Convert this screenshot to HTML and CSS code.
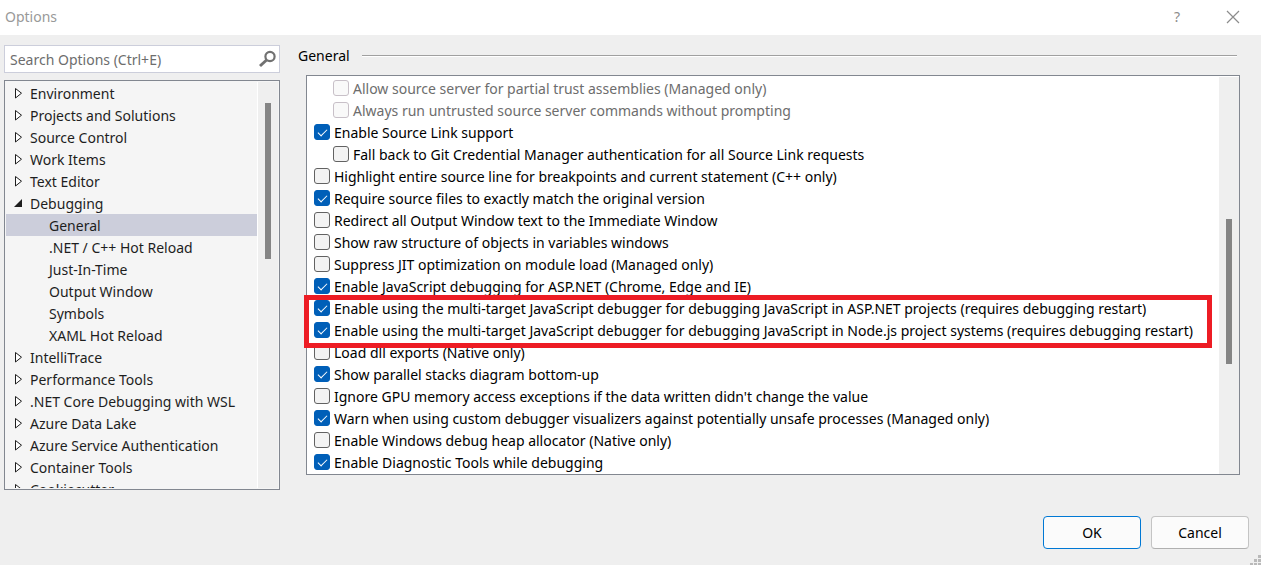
FILE: index.html
```html
<!DOCTYPE html>
<html lang="en">
<head>
<meta charset="utf-8">
<title>Options</title>
<link rel="stylesheet" href="styles.css">
</head>
<body>
<div class="dialog">
  <header class="titlebar">
    <h1 class="title">Options</h1>
    <button class="title-button help" type="button" aria-label="Help">?</button>
    <button class="title-button" type="button" aria-label="Close"><svg width="14" height="14" viewBox="0 0 14 14"><path d="M1 1L13 13M13 1L1 13" fill="none" stroke="#8c8c8c" stroke-width="1.2"/></svg></button>
  </header>
  <main class="content">
    <nav class="sidebar">
      <div class="search">
        <input class="search-input" type="text" placeholder="Search Options (Ctrl+E)" aria-label="Search Options">
        <svg class="search-icon" width="18" height="18" viewBox="0 0 18 18"><circle cx="12" cy="6.5" r="4.6" fill="none" stroke="#717171" stroke-width="2.2"/><path d="M8.6 10L2 16" stroke="#717171" stroke-width="3"/></svg>
      </div>
      <div class="tree">
        <ul class="tree-items" id="tree"></ul>
        <div class="scrollbar"><div class="thumb tree-thumb"></div></div>
      </div>
    </nav>
    <section class="page">
      <h2 class="page-title">General</h2>
      <div class="list-frame">
        <div class="list">
          <div class="options" id="options"></div>
          <div class="scrollbar"><div class="thumb list-thumb"></div></div>
        </div>
        <div class="highlight"></div>
      </div>
    </section>
  </main>
  <footer class="footer">
    <button class="button primary" type="button">OK</button>
    <button class="button" type="button">Cancel</button>
  </footer>
  <svg class="grip" width="11" height="10" viewBox="0 0 11 10" fill="#b9b9b9"><path d="M8 0h3v3h-3zM4 4h3v3h-3zM8 4h3v3h-3zM0 8h3v2h-3zM4 8h3v2h-3zM8 8h3v2h-3z"/></svg>
</div>
<script src="script.js"></script>
</body>
</html>
```
FILE: styles.css
```css
* { box-sizing: border-box; }
body {
  margin: 0;
  background: #efefef;
  color: #1e1e1e;
  font-family: "Noto Sans", "Open Sans", sans-serif;
  font-size: 14px;
  line-height: 22px;
}
.dialog { position: relative; display: flex; flex-direction: column; height: 100vh; }
.titlebar { display: flex; align-items: center; height: 35px; padding: 0 0 2px 5px; background: #fff; flex: none; }
.title { flex: 1; margin: 0; font-size: 14px; font-weight: 400; color: #999; }
.title-button { width: 56px; height: 32px; padding: 0; border: 0; background: none; color: #8c8c8c; font: inherit; }
.title-button svg { display: block; margin: auto; }
.content { flex: 1; display: flex; min-height: 0; padding-left: 4px; gap: 18px; }
.sidebar { flex: none; width: 276px; padding-top: 10px; display: flex; flex-direction: column; gap: 7px; }
.search { display: flex; align-items: center; flex: none; height: 28px; padding: 0 3px 0 5px; background: #fff; border: 1px solid #cccedb; }
.search-input { flex: 1; min-width: 0; padding: 2px 0 0; border: 0; outline: 0; background: none; font: inherit; color: #1e1e1e; }
.search-input::placeholder { color: #6d6d6d; opacity: 1; }
.tree { flex: 1; min-height: 0; display: flex; padding: 1px; border: 1px solid #828790; background: #f5f5f5; }
.tree-items { flex: 1; margin: 0; padding: 0; list-style: none; overflow: hidden; }
.tree-item { display: flex; align-items: center; height: 22px; padding-left: 8px; gap: 6px; white-space: nowrap; }
.tree-item.child { padding-left: 43px; }
.tree-item.selected { background: #cccedb; }
.tree-item span, .option span { padding-top: 2px; }
.arrow { flex: none; }
.scrollbar { flex: none; width: 20px; background: #efefef; }
.thumb { width: 6px; margin-left: 7px; background: #858585; }
.tree .scrollbar { width: 21px; border-left: 1px solid #fff; }
.tree-thumb { height: 156px; margin-top: 21px; }
.list-thumb { height: 145px; margin-top: 142px; }
.page { flex: 1; min-width: 0; padding: 10px 21px 15px 0; display: flex; flex-direction: column; gap: 8px; }
.page-title { display: flex; align-items: center; gap: 12px; margin: 0 3px 0 0; font-size: 14px; font-weight: 400; color: #000; }
.page-title::after { content: ""; flex: 1; height: 2px; background: linear-gradient(#a0a0a0 50%, #fff 50%); }
.list-frame { position: relative; flex: 1; min-height: 0; margin-left: 8px; display: flex; }
.list { flex: 1; min-width: 0; display: flex; padding-top: 1px; border: 1px solid #828790; background: #fff; }
.options { flex: 1; min-width: 0; overflow: hidden; padding-left: 7px; color: #000; }
.option { display: flex; align-items: center; gap: 4px; height: 22px; white-space: nowrap; }
.option.nested { padding-left: 19px; }
.option.disabled { color: #6d6d6d; }
.check { appearance: none; flex: none; width: 16px; height: 16px; margin: 0; border: 1px solid #626262; border-radius: 3px; background: #f3f3f3; }
.check:disabled { border-color: #c8c0c8; background: #f9f9f9; }
.check:checked { border-color: #005fb8; background: #005fb8; }
.check:checked::before { content: ""; display: block; width: 8px; height: 4px; margin: 4px 0 0 3px; border: solid #fff; border-width: 0 0 1px 1px; transform: rotate(-45deg); }
.highlight { position: absolute; left: -2px; top: 220px; width: 908px; height: 53px; border: 5px solid #ed1c24; pointer-events: none; }
.footer { flex: none; display: flex; justify-content: flex-end; gap: 10px; padding: 26px 12px 16px; }
.button { width: 98px; height: 33px; padding: 0; border: 1px solid #c4c4c4; border-bottom-color: #b0b0b0; border-radius: 4px; background: #fbfbfb; color: #000; font: inherit; }
.button.primary { border-color: #0078d4; }
.grip { position: absolute; right: 0; bottom: 0; }
```
FILE: script.js
```js
const tree = [
  ["Environment"], ["Projects and Solutions"], ["Source Control"], ["Work Items"], ["Text Editor"],
  ["Debugging", "open"], ["General", "child selected"], [".NET / C++ Hot Reload", "child"],
  ["Just-In-Time", "child"], ["Output Window", "child"], ["Symbols", "child"], ["XAML Hot Reload", "child"],
  ["IntelliTrace"], ["Performance Tools"], [".NET Core Debugging with WSL"], ["Azure Data Lake"],
  ["Azure Service Authentication"], ["Container Tools"], ["Cookiecutter"]
];
const closed = '<svg class="arrow" width="10" height="12" viewBox="0 0 10 12"><path d="M1.5 1.5V11L7.5 6.2Z" fill="#fff" stroke="#1e1e1e"/></svg>';
const open = '<svg class="arrow" width="10" height="12" viewBox="0 0 10 12"><path d="M8 2V10H0Z" fill="#1e1e1e"/></svg>';
document.getElementById("tree").innerHTML = tree.map(([name, kind = ""]) =>
  `<li class="tree-item ${kind}">${kind.includes("child") ? "" : kind === "open" ? open : closed}<span>${name}</span></li>`).join("");

const options = [
  ["Allow source server for partial trust assemblies (Managed only)", "nested disabled"],
  ["Always run untrusted source server commands without prompting", "nested disabled"],
  ["Enable Source Link support", "", true],
  ["Fall back to Git Credential Manager authentication for all Source Link requests", "nested"],
  ["Highlight entire source line for breakpoints and current statement (C++ only)", ""],
  ["Require source files to exactly match the original version", "", true],
  ["Redirect all Output Window text to the Immediate Window", ""],
  ["Show raw structure of objects in variables windows", ""],
  ["Suppress JIT optimization on module load (Managed only)", ""],
  ["Enable JavaScript debugging for ASP.NET (Chrome, Edge and IE)", "", true],
  ["Enable using the multi-target JavaScript debugger for debugging JavaScript in ASP.NET projects (requires debugging restart)", "", true],
  ["Enable using the multi-target JavaScript debugger for debugging JavaScript in Node.js project systems (requires debugging restart)", "", true],
  ["Load dll exports (Native only)", ""],
  ["Show parallel stacks diagram bottom-up", "", true],
  ["Ignore GPU memory access exceptions if the data written didn't change the value", ""],
  ["Warn when using custom debugger visualizers against potentially unsafe processes (Managed only)", "", true],
  ["Enable Windows debug heap allocator (Native only)", ""],
  ["Enable Diagnostic Tools while debugging", "", true]
];
document.getElementById("options").innerHTML = options.map(([text, kind, checked]) =>
  `<label class="option ${kind}"><input class="check" type="checkbox"${checked ? " checked" : ""}${kind.includes("disabled") ? " disabled" : ""}><span>${text}</span></label>`).join("");
```
